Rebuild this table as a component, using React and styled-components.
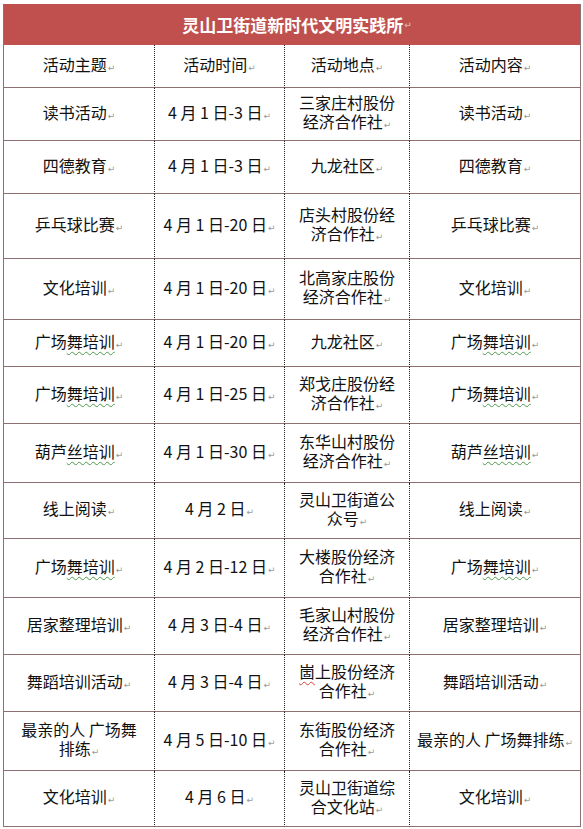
import React from "react";
import styled, { createGlobalStyle } from "styled-components";

const Global = createGlobalStyle`
  html, body { margin: 0; padding: 0; background: #ffffff; }
  body { font-family: "Noto Sans CJK SC", "Noto Sans", sans-serif; }
`;

const LINE = "#8e6f72";

const Page = styled.div`
  padding: 4px 0 0 3px;
  width: 583px;
  box-sizing: border-box;
`;

const Table = styled.div`
  width: 578px;
  box-sizing: border-box;
  border-left: 1px solid ${LINE};
  border-right: 1px solid ${LINE};
  display: grid;
  grid-template-columns: 151px 130px 125px 170px;
`;

const Title = styled.div`
  grid-column: 1 / -1;
  height: 41px;
  background: #c0504d;
  color: #ffffff;
  font-weight: 700;
  font-size: 17px;
  display: flex;
  align-items: center;
  justify-content: center;
  letter-spacing: 0;
`;

const Cell = styled.div`
  height: ${(p) => p.$h}px;
  box-sizing: border-box;
  border-bottom: 1px solid ${LINE};
  border-right: ${(p) => (p.$last ? "none" : "1px dotted #222")};
  display: flex;
  align-items: center;
  justify-content: center;
  text-align: center;
  font-size: 16px;
  line-height: 19px;
  color: #111;
  padding: 0 4px;
`;

const Text = styled.div`
  white-space: nowrap;
`;

const Mark = styled.span`
  font-family: "DejaVu Sans", sans-serif;
  font-size: 9px;
  color: ${(p) => (p.$faint ? "#dba8a6" : "#9a9a9a")};
  margin-left: 1px;
  margin-right: ${(p) => (p.$faint ? "-10px" : "0")};
  vertical-align: 0;
`;

const Wavy = styled.span`
  text-decoration-line: underline;
  text-decoration-style: wavy;
  text-decoration-color: ${(p) => (p.$red ? "#d84040" : "#4d9a4d")};
  text-decoration-thickness: 1px;
  text-underline-offset: 3px;
`;

const headers = ["活动主题", "活动时间", "活动地点", "活动内容"];

const rows = [
  [53, ["读书活动"], ["4 月 1 日-3 日"], ["三家庄村股份", "经济合作社"], ["读书活动"]],
  [53, ["四德教育"], ["4 月 1 日-3 日"], ["九龙社区"], ["四德教育"]],
  [65, ["乒乓球比赛"], ["4 月 1 日-20 日"], ["店头村股份经", "济合作社"], ["乒乓球比赛"]],
  [61, ["文化培训"], ["4 月 1 日-20 日"], ["北高家庄股份", "经济合作社"], ["文化培训"]],
  [47, ["广场{舞培训}"], ["4 月 1 日-20 日"], ["九龙社区"], ["广场{舞培训}"]],
  [57, ["广场{舞培训}"], ["4 月 1 日-25 日"], ["郑戈庄股份经", "济合作社"], ["广场{舞培训}"]],
  [59, ["葫芦{丝培训}"], ["4 月 1 日-30 日"], ["东华山村股份", "经济合作社"], ["葫芦{丝培训}"]],
  [56, ["线上阅读"], ["4 月 2 日"], ["灵山卫街道公", "众号"], ["线上阅读"]],
  [59, ["广场{舞培训}"], ["4 月 2 日-12 日"], ["大楼股份经济", "合作社"], ["广场{舞培训}"]],
  [57, ["居家整理培训"], ["4 月 3 日-4 日"], ["毛家山村股份", "经济合作社"], ["居家整理培训"]],
  [57, ["舞蹈培训活动"], ["4 月 3 日-4 日"], ["[崮]上股份经济", "合作社"], ["舞蹈培训活动"]],
  [59, ["最亲的人 广场舞", "排练"], ["4 月 5 日-10 日"], ["东街股份经济", "合作社"], ["最亲的人 广场舞排练"]],
  [56, ["文化培训"], ["4 月 6 日"], ["灵山卫街道综", "合文化站"], ["文化培训"]],
];

function renderLine(str, key) {
  const parts = [];
  const re = /\{([^}]+)\}|\[([^\]]+)\]/g;
  let last = 0;
  let m;
  let i = 0;
  while ((m = re.exec(str))) {
    if (m.index > last) parts.push(str.slice(last, m.index));
    if (m[1]) parts.push(<Wavy key={i++}>{m[1]}</Wavy>);
    else parts.push(<Wavy key={i++} $red>{m[2]}</Wavy>);
    last = m.index + m[0].length;
  }
  if (last < str.length) parts.push(str.slice(last));
  return <React.Fragment key={key}>{parts}</React.Fragment>;
}

function CellText({ lines }) {
  return (
    <Text>
      {lines.map((l, i) => (
        <React.Fragment key={i}>
          {i > 0 && <br />}
          {renderLine(l, i)}
          {i === lines.length - 1 && <Mark>↵</Mark>}
        </React.Fragment>
      ))}
    </Text>
  );
}

export default function App() {
  return (
    <Page>
      <Global />
      <Table>
        <Title>
          灵山卫街道新时代文明实践所<Mark $faint>↵</Mark>
        </Title>
        {headers.map((h, i) => (
          <Cell key={h} $h={43} $last={i === 3}>
            <CellText lines={[h]} />
          </Cell>
        ))}
        {rows.map(([h, ...cells], r) =>
          cells.map((lines, c) => (
            <Cell key={`${r}-${c}`} $h={h} $last={c === 3}>
              <CellText lines={lines} />
            </Cell>
          ))
        )}
      </Table>
    </Page>
  );
}
